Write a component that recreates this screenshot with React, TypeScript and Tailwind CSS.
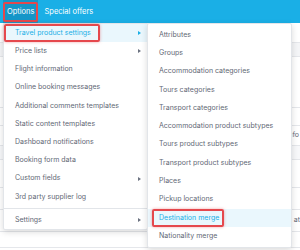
import React from 'react';

const leftItems = [
  { label: 'Travel product settings', sub: true, active: true },
  { label: 'Price lists', sub: true },
  { label: 'Flight information' },
  { label: 'Online booking messages' },
  { label: 'Additional comments templates' },
  { label: 'Static content templates' },
  { label: 'Dashboard notifications' },
  { label: 'Booking form data' },
  { label: 'Custom fields', sub: true },
  { label: '3rd party supplier log' },
];

const subItems = [
  'Attributes',
  'Groups',
  'Accommodation categories',
  'Tours categories',
  'Transport categories',
  'Accommodation product subtypes',
  'Tours product subtypes',
  'Transport product subtypes',
  'Places',
  'Pickup locations',
  'Destination merge',
  'Nationality merge',
];

function Caret({ active }: { active?: boolean }) {
  return (
    <svg width="3" height="4" viewBox="0 0 3 4" className="ml-auto mr-[6px]">
      <path d="M0 0 L3 2 L0 4 Z" fill={active ? '#1aafe6' : '#6b7280'} />
    </svg>
  );
}

export default function App() {
  return (
    <div className="relative w-[300px] h-[250px] overflow-hidden bg-white font-['Inter',sans-serif] text-[7px] text-[#5f6875]">
      {/* top nav */}
      <div className="flex h-[23px] items-stretch bg-[#1aafe6] pl-[3px] text-[7.5px] text-white">
        <div className="relative flex items-center bg-[#1596c8] px-[4px]">
          Options
          <span className="absolute inset-x-0 top-[2px] bottom-[1px] rounded-[2px] border-2 border-[#e5484d]" />
        </div>
        <div className="flex items-center px-[6px]">Special offers</div>
      </div>

      {/* page content behind the menus */}
      <div className="flex flex-col">
        <div className="h-[19px]" />
        <div className="h-[15px] border-y border-[#e5e7eb] bg-[#f4f5f7]" />
        <div className="h-[51px] border-b border-[#e5e7eb]" />
        <div className="h-[18px] border-b border-[#e5e7eb]" />
        <div className="flex h-[20px] items-center justify-end border-b border-[#e5e7eb] pr-[1px]">info</div>
        <div className="h-[14px] border-b border-[#e5e7eb] bg-[#f7f8fa]" />
        <div className="h-[28px] border-b border-[#e5e7eb]" />
        <div className="h-[22px] border-b border-[#e5e7eb]" />
        <div className="flex h-[22px] items-center justify-end border-b border-[#e5e7eb]">at</div>
        <div className="h-[16px] border-b border-[#e5e7eb]" />
      </div>

      {/* options dropdown */}
      <div className="absolute left-[3px] top-[23px] w-[145px] rounded-b-[2px] border border-[#e2e5e9] bg-white pt-[0px] pb-[0px] shadow-[0_2px_6px_rgba(0,0,0,0.15)]">
        {leftItems.map((it) => (
          <div
            key={it.label}
            className={
              it.active
                ? 'relative flex h-[18.2px] items-center bg-[#eaf7fd] pl-[11px] text-[#1aafe6]'
                : 'relative flex h-[18.2px] items-center pl-[11px]'
            }
          >
            {it.label}
            {it.sub && <Caret active={it.active} />}
            {it.active && (
              <span className="absolute left-0 top-0 bottom-0 w-[96px] rounded-[2px] border-2 border-[#e5484d] shadow-[0_0_3px_rgba(229,72,77,0.5)]" />
            )}
          </div>
        ))}
        <div className="my-[2px] border-t border-[#e2e5e9]" />
        <div className="flex h-[18.2px] items-center pl-[11px]">
          Settings
          <Caret />
        </div>
      </div>

      {/* travel product settings submenu */}
      <div className="absolute left-[147px] top-[23px] w-[145px] rounded-[2px] border border-[#e2e5e9] bg-white py-[2px] shadow-[0_2px_6px_rgba(0,0,0,0.15)]">
        {subItems.map((label) => {
          const active = label === 'Destination merge';
          return (
            <div
              key={label}
              className={
                active
                  ? 'relative flex h-[18.27px] items-center bg-[#eaf7fd] pl-[11px] text-[#1aafe6]'
                  : 'flex h-[18.27px] items-center pl-[11px]'
              }
            >
              {label}
              {active && (
                <span className="absolute left-[4px] top-0 bottom-0 w-[72px] rounded-[2px] border-2 border-[#e5484d] shadow-[0_0_3px_rgba(229,72,77,0.5)]" />
              )}
            </div>
          );
        })}
      </div>
    </div>
  );
}
